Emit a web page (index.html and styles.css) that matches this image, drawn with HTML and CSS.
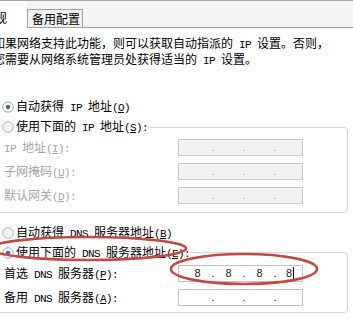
FILE: index.html
```html
<!DOCTYPE html>
<html lang="zh-CN">
<head>
<meta charset="utf-8">
<title>Internet 协议 (TCP/IP) 属性</title>
<link rel="stylesheet" href="styles.css">
</head>
<body>
<div class="tabs">
  <div class="tab tab-main">常规</div>
  <div class="tab tab-alt">备用配置</div>
  <div class="tab-fill"></div>
</div>

<p class="desc">如果网络支持此功能，则可以获取自动指派的<span class="a"> IP </span>设置。否则，<br>您需要从网络系统管理员处获得适当的<span class="a"> IP </span>设置。</p>

<div class="opt r1">
  <svg class="radio" width="12" height="12" viewBox="0 0 12 12"><circle cx="6" cy="6" r="5.3" fill="#f4f4f4" stroke="#a9aeb6"/><circle cx="6" cy="6" r="3.2" fill="#fff"/><circle cx="6" cy="6" r="2.3" fill="#4b6b97"/></svg>
  <span>自动获得<span class="a"> IP </span>地址<span class="a">(<u>O</u>)</span></span>
</div>

<fieldset class="group g1">
  <legend class="lg1">
    <div class="opt">
      <svg class="radio" width="12" height="12" viewBox="0 0 12 12"><circle cx="6" cy="6" r="5.3" fill="#f2f2f2" stroke="#b4b8bf"/></svg>
      <span>使用下面的<span class="a"> IP </span>地址<span class="a">(<u>S</u>):</span></span>
    </div>
  </legend>
  <div class="row off">
    <span class="lbl"><span class="a">IP </span>地址<span class="a">(<u>I</u>):</span></span>
    <div class="ip"><span class="seg"></span><span class="dot">.</span><span class="seg"></span><span class="dot">.</span><span class="seg"></span><span class="dot">.</span><span class="seg last"></span></div>
  </div>
  <div class="row off">
    <span class="lbl">子网掩码<span class="a">(<u>U</u>):</span></span>
    <div class="ip"><span class="seg"></span><span class="dot">.</span><span class="seg"></span><span class="dot">.</span><span class="seg"></span><span class="dot">.</span><span class="seg last"></span></div>
  </div>
  <div class="row off">
    <span class="lbl">默认网关<span class="a">(<u>D</u>):</span></span>
    <div class="ip"><span class="seg"></span><span class="dot">.</span><span class="seg"></span><span class="dot">.</span><span class="seg"></span><span class="dot">.</span><span class="seg last"></span></div>
  </div>
</fieldset>

<div class="opt r3">
  <svg class="radio" width="12" height="12" viewBox="0 0 12 12"><circle cx="6" cy="6" r="5.3" fill="#f2f2f2" stroke="#b4b8bf"/></svg>
  <span>自动获得<span class="a"> DNS </span>服务器地址<span class="a">(<u>B</u>)</span></span>
</div>

<fieldset class="group g2">
  <legend class="lg2">
    <div class="opt tight">
      <svg class="radio" width="12" height="12" viewBox="0 0 12 12"><circle cx="6" cy="6" r="5.3" fill="#f4f4f4" stroke="#a9aeb6"/><circle cx="6" cy="6" r="3.2" fill="#fff"/><circle cx="6" cy="6" r="2.3" fill="#4b6b97"/></svg>
      <span>使用下面的<span class="a"> DNS </span>服务器地址<span class="a">(<u>E</u>):</span></span>
    </div>
  </legend>
  <div class="row">
    <span class="lbl">首选<span class="a"> DNS </span>服务器<span class="a">(<u>P</u>):</span></span>
    <div class="ip on"><span class="seg">8</span><span class="dot">.</span><span class="seg">8</span><span class="dot">.</span><span class="seg">8</span><span class="dot">.</span><span class="seg last"><span class="caret">8</span></span></div>
  </div>
  <div class="row">
    <span class="lbl">备用<span class="a"> DNS </span>服务器<span class="a">(<u>A</u>):</span></span>
    <div class="ip on"><span class="seg"></span><span class="dot">.</span><span class="seg"></span><span class="dot">.</span><span class="seg"></span><span class="dot">.</span><span class="seg last"></span></div>
  </div>
</fieldset>

<svg class="marks" width="353" height="319" viewBox="0 0 353 319">
  <ellipse cx="88" cy="248.5" rx="98" ry="11.5" fill="none" stroke="#c04a46" stroke-width="2.6"/>
  <ellipse cx="244" cy="269" rx="73" ry="15" fill="none" stroke="#c04a46" stroke-width="2.6"/>
</svg>
</body>
</html>
```

FILE: styles.css
```css
* {
  box-sizing: border-box;
}

html,
body {
  margin: 0;
  padding: 0;
}

body {
  position: relative;
  width: 353px;
  height: 319px;
  overflow: hidden;
  background: #fff;
  color: #000;
  font-family: "Noto Sans CJK SC", sans-serif;
  font-size: 12px;
  line-height: 14px;
}

.a {
  font-family: "Liberation Mono", "DejaVu Sans Mono", monospace;
  font-size: 11px;
  letter-spacing: -0.6px;
}

u {
  text-decoration: underline;
  text-underline-offset: 1px;
}

/* tab strip */
.tabs {
  display: flex;
  height: 28px;
  border-top: 1px solid #a3a6ab;
  background: #f3f3f3;
}

.tab {
  white-space: nowrap;
}

.tab-main {
  margin-left: -17px;
  width: 44px;
  padding-top: 10px;
  background: #fff;
}

.tab-alt {
  margin-top: 8px;
  width: 56px;
  padding: 2px 0 0 4px;
  border: 1px solid #9ea1a5;
  background: #f0f0f0;
}

.tab-fill {
  flex: 1;
  border-bottom: 1px solid #9ea1a5;
}

/* description */
.desc {
  margin: 8px 0 0 -7px;
  white-space: nowrap;
}

/* radio options */
.opt {
  display: flex;
  align-items: center;
  gap: 2px;
  height: 20px;
  padding-left: 2px;
  white-space: nowrap;
}

.opt.tight {
  height: 19px;
}

.radio {
  flex: none;
}

.r1 {
  margin-top: 29px;
}

.r3 {
  margin-top: 10px;
}

/* group boxes */
.group {
  margin: 0 0 0 -10px;
  width: 358px;
  min-width: 0;
  border: 1px solid #d6d6d6;
  border-radius: 4px;
}

.group legend {
  padding: 0;
}

.g1 {
  padding: 2px 0 8px 9px;
}

.lg1 {
  padding-right: 22px;
}

.g2 {
  padding: 3px 0 6px 9px;
}

.lg2 {
  padding-right: 6px;
}

/* address rows */
.row {
  display: grid;
  grid-template-columns: 178px 125px;
  align-items: center;
  height: 17px;
  margin-bottom: 7px;
}

.row:last-child {
  margin-bottom: 0;
}

.lbl {
  padding-left: 4px;
  white-space: nowrap;
}

.row.off .lbl {
  color: #a6a6a6;
}

.ip {
  display: flex;
  height: 17px;
  padding-left: 6px;
  border: 1px solid #c9c9c9;
  background: #f1f1f1;
  font-family: "Liberation Sans", sans-serif;
  font-size: 11px;
  line-height: 15px;
  color: #999;
}

.ip.on {
  background: #fff;
  border-color: #c2c2c2;
  color: #222;
}

.seg {
  width: 25px;
  text-align: center;
}

.seg.last {
  flex: 1;
}

.dot {
  width: 6px;
  text-align: center;
}

.caret {
  padding-right: 1px;
  border-right: 1px solid #000;
}

/* annotation overlay */
.marks {
  position: absolute;
  top: 0;
  left: 0;
  pointer-events: none;
}
```
